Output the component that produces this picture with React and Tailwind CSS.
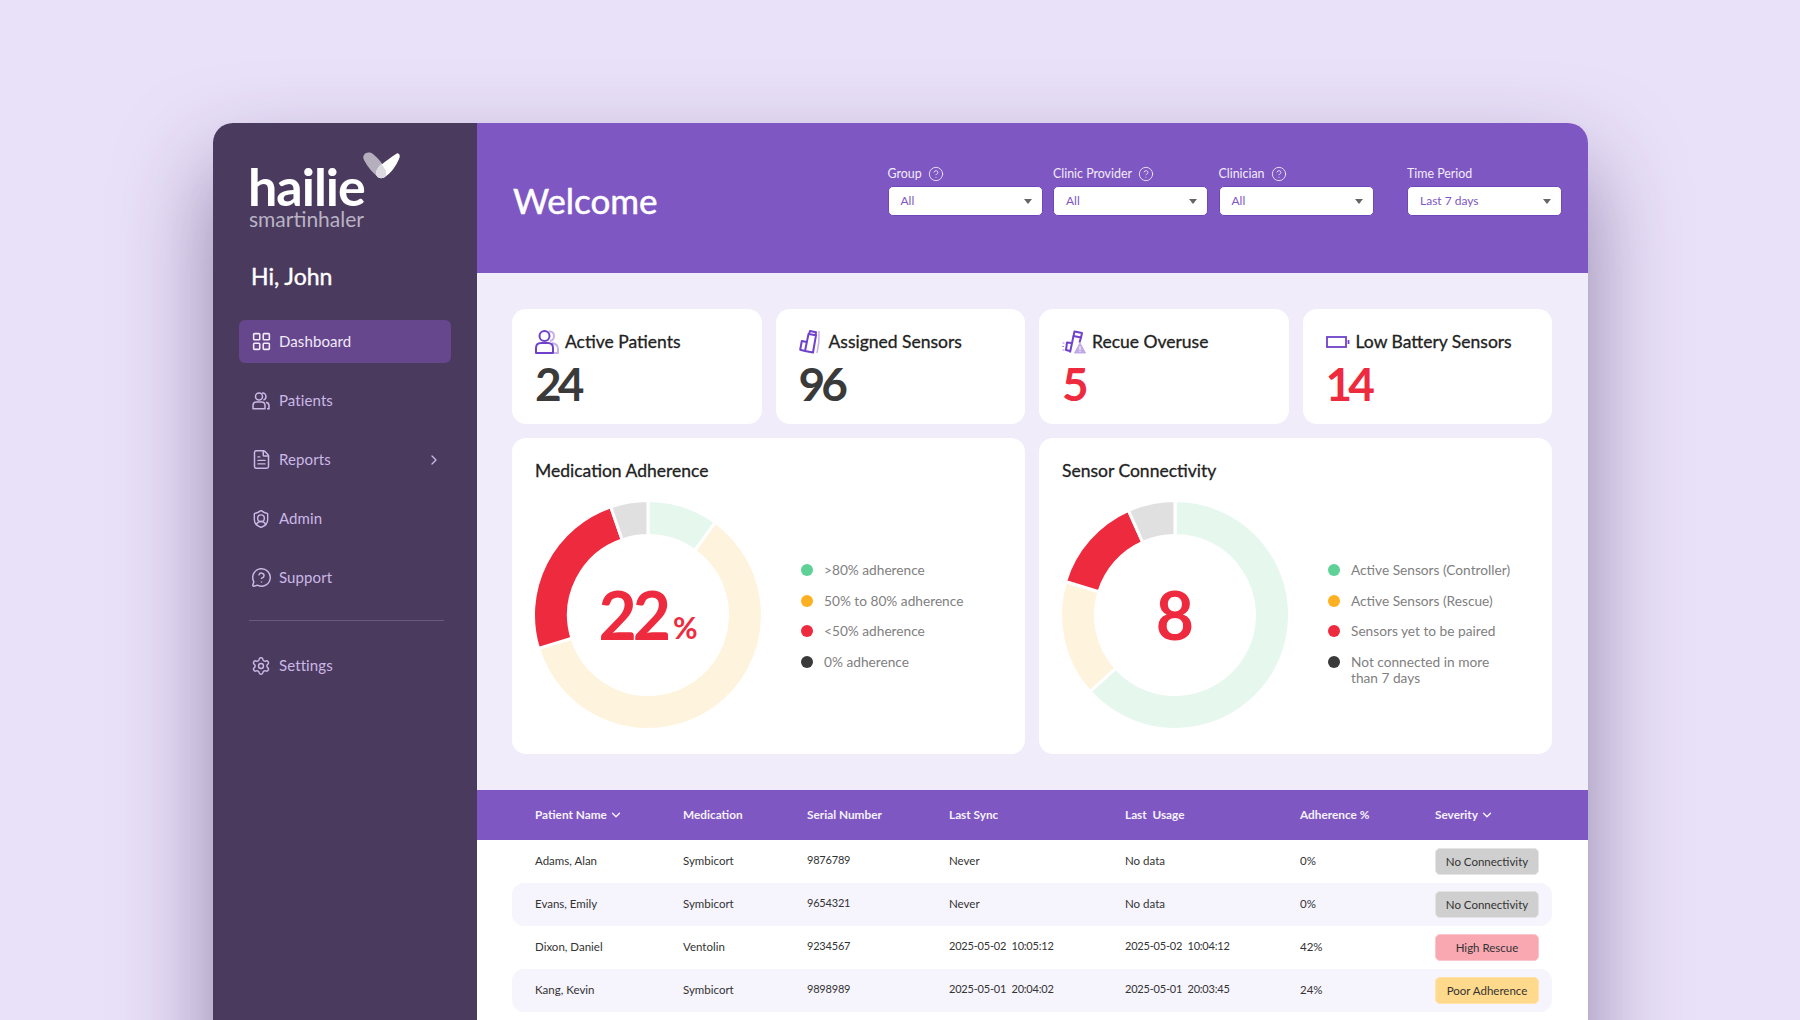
import React from 'react'
import { LayoutGrid, FileText, ShieldUser, MessageCircleQuestion, Settings, ChevronRight, ChevronDown, CircleHelp } from 'lucide-react'

const font = { fontFamily: 'Lato, sans-serif' }

function polar(cx, cy, r, deg) {
  const a = ((deg - 90) * Math.PI) / 180
  return [cx + r * Math.cos(a), cy + r * Math.sin(a)]
}

// one ring slice, from and to are degrees clockwise from the top
// radii are 1.5 bigger each way because the white stroke eats into them
function slice(from, to) {
  const [x1, y1] = polar(113, 113, 114.5, from)
  const [x2, y2] = polar(113, 113, 114.5, to)
  const [x3, y3] = polar(113, 113, 79.5, to)
  const [x4, y4] = polar(113, 113, 79.5, from)
  const large = to - from > 180 ? 1 : 0
  return `M${x1} ${y1}A114.5 114.5 0 ${large} 1 ${x2} ${y2}L${x3} ${y3}A79.5 79.5 0 ${large} 0 ${x4} ${y4}Z`
}

function Donut({ parts, children }) {
  return (
    <div className="relative w-[226px] h-[226px] shrink-0">
      <svg className="overflow-visible" width="226" height="226" viewBox="0 0 226 226">
        {parts.map(p => (
          <path key={p.from} d={slice(p.from, p.to)} fill={p.color} stroke="#fff" strokeWidth="3" />
        ))}
      </svg>
      <div className="absolute inset-0 flex items-center justify-center text-[#ee2b3e] font-bold">{children}</div>
    </div>
  )
}

function Legend({ items }) {
  return (
    <div className="flex flex-col gap-[14.7px] text-[13.7px] leading-4 text-[#808080]">
      {items.map(i => (
        <div key={i.label} className="flex items-start">
          <span className="w-[12px] h-[12px] rounded-full mt-[2px] mr-[11px] shrink-0" style={{ background: i.color }} />
          <span className="w-[165px]">{i.label}</span>
        </div>
      ))}
    </div>
  )
}

function Logo() {
  return (
    <div className="relative h-[66px] text-white">
      <div className="text-[52px] leading-[44px] font-bold tracking-[-1px]">hailie</div>
      <div className="text-[21px] leading-[22px] text-[#b9b3c4] ml-px">smartinhaler</div>
      <svg className="absolute left-[115px] top-[-12px]" width="38" height="28" viewBox="0 0 38 28">
        <path d="M1 3C3 0 7 0 10 2C15 6 21 13 23 19C24 24 21 27 17 26C11 23 4 14 1 8C0 6 0 4 1 3Z" fill="#b4aebd" />
        <path d="M36 2C37 3 37 5 36 7C33 14 28 21 22 25C18 27 14 26 13 22C13 19 15 15 18 13C23 9 28 5 33 2C34 1 35 1 36 2Z" fill="#fff" />
        <path d="M18 12C21 15 23 18 23 20C24 24 21 27 17 26C15 26 13 24 13 21C13 18 15 15 18 12Z" fill="#dcd9e0" />
      </svg>
    </div>
  )
}

function PatientsIcon() {
  return (
    <svg className="shrink-0" width="18" height="18" viewBox="0 0 18 18" fill="none" stroke="currentColor" strokeWidth="1.5">
      <circle cx="7" cy="4.5" r="3.5" />
      <path d="M10 1.3C12 .6 14 2.2 14 4.5C14 6.2 13 7.5 11.5 8" />
      <path d="M1 16.8V13.5C1 11.5 2.5 10 4.5 10H9.5C11.5 10 13 11.5 13 13.5V16.8Z" strokeLinejoin="round" />
      <path d="M14 10.3C15.8 10.6 17 12 17 13.8V16.8H15" />
    </svg>
  )
}

function NavItem({ icon, label, active, chevron }) {
  return (
    <div className={`flex items-center h-[43px] pl-[13px] pr-[9px] rounded-md text-[15px] ${active ? 'bg-[#66468c] text-[#f1eaf9]' : 'text-[#cbb8e6]'}`}>
      <span className="w-[18px] flex justify-center mr-[9px]">{icon}</span>
      <span className="flex-1 tracking-[0.1px]">{label}</span>
      {chevron && <ChevronRight size={16} strokeWidth={2} />}
    </div>
  )
}

function Sidebar() {
  return (
    <aside className="w-[264px] shrink-0 bg-[#4a3a5e] flex flex-col">
      <div className="pl-[35px] pt-[41px]"><Logo /></div>
      <div className="pl-[38px] mt-[32px] text-[23px] leading-7 text-white [-webkit-text-stroke:0.4px_currentColor]">Hi, John</div>
      <nav className="mt-[30px] px-[26px] flex flex-col gap-4">
        <NavItem active label="Dashboard" icon={<LayoutGrid className="shrink-0" size={21} strokeWidth={1.8} />} />
        <NavItem label="Patients" icon={<PatientsIcon />} />
        <NavItem label="Reports" chevron icon={<FileText className="shrink-0" size={21} strokeWidth={1.7} />} />
        <NavItem label="Admin" icon={<ShieldUser className="shrink-0" size={20} strokeWidth={1.7} />} />
        <NavItem label="Support" icon={<MessageCircleQuestion className="shrink-0" size={21} strokeWidth={1.7} />} />
      </nav>
      <div className="ml-[36px] mr-[33px] mt-[21px] mb-[23px] h-px bg-[#6a5a80]" />
      <div className="px-[26px]">
        <NavItem label="Settings" icon={<Settings className="shrink-0" size={20} strokeWidth={1.7} />} />
      </div>
    </aside>
  )
}

function Filter({ label, value, help, className }) {
  return (
    <div className={`w-[155px] ${className || ''}`}>
      <div className="flex items-center gap-[6px] h-4 text-[12.4px] text-[#f2ecfb]">
        {label}
        {help && <CircleHelp size={16} strokeWidth={1.3} />}
      </div>
      <div className="mt-1 h-[30px] bg-white rounded-[5px] border border-[#6f47b8] flex items-center justify-between pl-3 pr-[10px] text-[12px] text-[#7e57c2]">
        {value}
        <span className="w-0 h-0 border-x-[4px] border-x-transparent border-t-[5px] border-t-[#666]" />
      </div>
    </div>
  )
}

function StatCard({ icon, title, value, red }) {
  return (
    <div className="bg-white rounded-[14px] h-[115px] pl-[23px] pt-[20px]">
      <div className="flex items-center h-[26px] text-[17.5px] text-[#222] [-webkit-text-stroke:0.3px_currentColor]">
        <span className="w-[30px] shrink-0">{icon}</span>
        {title}
      </div>
      <div className={`mt-[3px] text-[46px] leading-[52px] font-bold tracking-[-4px] ${red ? 'text-[#ee2b3e]' : 'text-[#3a3a3a]'}`}>{value}</div>
    </div>
  )
}

const ActiveIcon = (
  <svg width="24" height="24" viewBox="0 0 24 24" fill="none" strokeWidth="2" strokeLinejoin="round">
    <path d="M14 1.5C17 1 19 3.2 19 6C19 8.5 17.5 10.5 15 11" stroke="#c5b3e6" />
    <path d="M17 13C20 13.5 23 15 23 19V23H19" stroke="#c5b3e6" />
    <circle cx="9.5" cy="6" r="5" stroke="#6f42c9" />
    <path d="M1 23V18C1 15 3 13 6 13H13C16 13 18 15 18 18V23Z" stroke="#6f42c9" />
  </svg>
)

const SensorIcon = (
  <svg width="24" height="24" viewBox="0 0 24 24" fill="none" strokeWidth="2" strokeLinejoin="round">
    <path d="M20 1C20.5 8 20 15 18 23" stroke="#c5b3e6" strokeWidth="1.5" />
    <path d="M10 4L11 1L17 2.2L16.6 5" stroke="#6f42c9" />
    <path d="M9.5 4L17 5.2L14 22.5L6 21Z" stroke="#6f42c9" />
    <path d="M7.6 12L2.8 11L1.2 19.8L6 21" stroke="#6f42c9" />
  </svg>
)

const OveruseIcon = (
  <svg width="24" height="24" viewBox="0 0 24 24" fill="none" strokeWidth="2" strokeLinejoin="round">
    <path d="M11.5 6L12.5 1.5L20 3L19 7.5Z" stroke="#6f42c9" />
    <path d="M11.5 6L8 22.5M19 7.5L17.5 12.5" stroke="#6f42c9" />
    <path d="M9.5 13L5 12.5L4 20L8 21" stroke="#6f42c9" />
    <path d="M0.5 13H2.5M0 16.5H2M0.5 20H2.5" stroke="#a78bdc" strokeWidth="1.2" />
    <path d="M18 13L23.5 23H12.5Z" fill="#bfaae6" stroke="#bfaae6" strokeWidth="1" />
    <path d="M18 16.5V20M18 21V22" stroke="#fff" strokeWidth="1.1" />
  </svg>
)

const BatteryIcon = (
  <svg width="24" height="24" viewBox="0 0 24 24" fill="none" stroke="#6f42c9">
    <rect x="1" y="7" width="19" height="10" strokeWidth="1.8" />
    <path d="M22.5 10V14" strokeWidth="1.8" />
  </svg>
)

const greenDot = '#5ed197'
const amberDot = '#fdb022'
const redDot = '#ee2b3e'
const darkDot = '#3a3a3a'

function ChartCard({ title, parts, legend, children }) {
  return (
    <div className="bg-white rounded-[14px] h-[316px] pl-[23px] pt-[20px]">
      <div className="h-[26px] flex items-center text-[17.5px] text-[#222] [-webkit-text-stroke:0.3px_currentColor]">{title}</div>
      <div className="flex items-start mt-[18px]">
        <Donut parts={parts}>{children}</Donut>
        <div className="mt-[60px] ml-[40px]">
          <Legend items={legend} />
        </div>
      </div>
    </div>
  )
}

const rows = [
  ['Adams, Alan', 'Symbicort', '9876789', 'Never', 'No data', '0%', 'No Connectivity', 'bg-[#cfcfcf] border-[#e4e4e4]'],
  ['Evans, Emily', 'Symbicort', '9654321', 'Never', 'No data', '0%', 'No Connectivity', 'bg-[#cfcfcf] border-[#e4e4e4]'],
  ['Dixon, Daniel', 'Ventolin', '9234567', '2025-05-02  10:05:12', '2025-05-02  10:04:12', '42%', 'High Rescue', 'bg-[#f9a8b2] border-[#fcc4cb]'],
  ['Kang, Kevin', 'Symbicort', '9898989', '2025-05-01  20:04:02', '2025-05-01  20:03:45', '24%', 'Poor Adherence', 'bg-[#ffd98c] border-[#ffe3aa]'],
]

const cols = 'grid grid-cols-[148px_124px_142px_176px_175px_135px_1fr] items-center pl-[23px]'

function Table() {
  return (
    <section className="bg-white flex-1">
      <div className="bg-[#7e57c2] h-[50px] pl-[35px] pr-[36px] text-[11.8px] font-bold text-[#f6f1fd]">
        <div className={`${cols} h-full`}>
          <div className="flex items-center gap-[2px]">Patient Name <ChevronDown size={14} strokeWidth={2.4} /></div>
          <div>Medication</div>
          <div>Serial Number</div>
          <div>Last Sync</div>
          <div className="whitespace-pre">Last  Usage</div>
          <div>Adherence %</div>
          <div className="flex items-center gap-[2px]">Severity <ChevronDown size={14} strokeWidth={2.4} /></div>
        </div>
      </div>
      <div className="pl-[35px] pr-[36px] text-[11.5px] text-[#333]">
        {rows.map((r, i) => (
          <div key={r[0]} className={`${cols} h-[43px] rounded-[12px] whitespace-pre ${i % 2 ? 'bg-[#f6f4fc]' : ''}`}>
            {r.slice(0, 6).map((c, j) => (
              <div key={j} className={`-mt-[2px] ${j >= 2 && j <= 4 && /^\d/.test(c) ? 'text-[11px] tracking-[-0.2px]' : ''}`}>{c}</div>
            ))}
            <div className={`w-[104px] h-[27px] rounded-[5px] border flex items-center justify-center text-[#333] ${r[7]}`}>{r[6]}</div>
          </div>
        ))}
      </div>
    </section>
  )
}

export default function App() {
  return (
    <div className="h-[1020px] overflow-hidden bg-[#e9e0f9] pt-[123px] pl-[213px]" style={font}>
      <div className="w-[1375px] h-[960px] flex rounded-t-[20px] overflow-hidden shadow-[0_45px_90px_rgba(60,40,90,0.5)]">
        <Sidebar />
        <main className="flex-1 flex flex-col bg-[#f0ecfa]">
          <header className="h-[150px] shrink-0 bg-[#7e57c2] flex pl-[36px] pr-[26px] pt-[43px]">
            <h1 className="text-[35px] leading-[44px] text-white mt-[12px] [-webkit-text-stroke:0.5px_currentColor]">Welcome</h1>
            <div className="ml-auto flex gap-[10.5px]">
              <Filter label="Group" value="All" help />
              <Filter label="Clinic Provider" value="All" help />
              <Filter label="Clinician" value="All" help />
              <Filter label="Time Period" value="Last 7 days" className="ml-[23px]" />
            </div>
          </header>
          <div className="pl-[35px] pr-[36px] pt-[36px] pb-[36px] flex flex-col gap-[14px]">
            <div className="grid grid-cols-4 gap-[14px]">
              <StatCard icon={ActiveIcon} title="Active Patients" value="24" />
              <StatCard icon={SensorIcon} title="Assigned Sensors" value="96" />
              <StatCard icon={OveruseIcon} title="Recue Overuse" value="5" red />
              <StatCard icon={BatteryIcon} title="Low Battery Sensors" value="14" red />
            </div>
            <div className="grid grid-cols-2 gap-[14px]">
              <ChartCard
                title="Medication Adherence"
                parts={[
                  { from: 0, to: 36, color: '#e6f7ee' },
                  { from: 36, to: 253, color: '#fef3dd' },
                  { from: 253, to: 341, color: '#ee2b3e' },
                  { from: 341, to: 360, color: '#e0e0e0' },
                ]}
                legend={[
                  { label: '>80% adherence', color: greenDot },
                  { label: '50% to 80% adherence', color: amberDot },
                  { label: '<50% adherence', color: redDot },
                  { label: '0% adherence', color: darkDot },
                ]}
              >
                <span className="text-[66px] leading-none tracking-[-4px]">22</span>
                <span className="text-[30px] leading-none mt-[24px] ml-[6px]">%</span>
              </ChartCard>
              <ChartCard
                title="Sensor Connectivity"
                parts={[
                  { from: 0, to: 228, color: '#e6f7ee' },
                  { from: 228, to: 287, color: '#fef3dd' },
                  { from: 287, to: 336, color: '#ee2b3e' },
                  { from: 336, to: 360, color: '#e0e0e0' },
                ]}
                legend={[
                  { label: 'Active Sensors (Controller)', color: greenDot },
                  { label: 'Active Sensors (Rescue)', color: amberDot },
                  { label: 'Sensors yet to be paired', color: redDot },
                  { label: 'Not connected in more than 7 days', color: darkDot },
                ]}
              >
                <span className="text-[66px] leading-none">8</span>
              </ChartCard>
            </div>
          </div>
          <Table />
        </main>
      </div>
    </div>
  )
}
